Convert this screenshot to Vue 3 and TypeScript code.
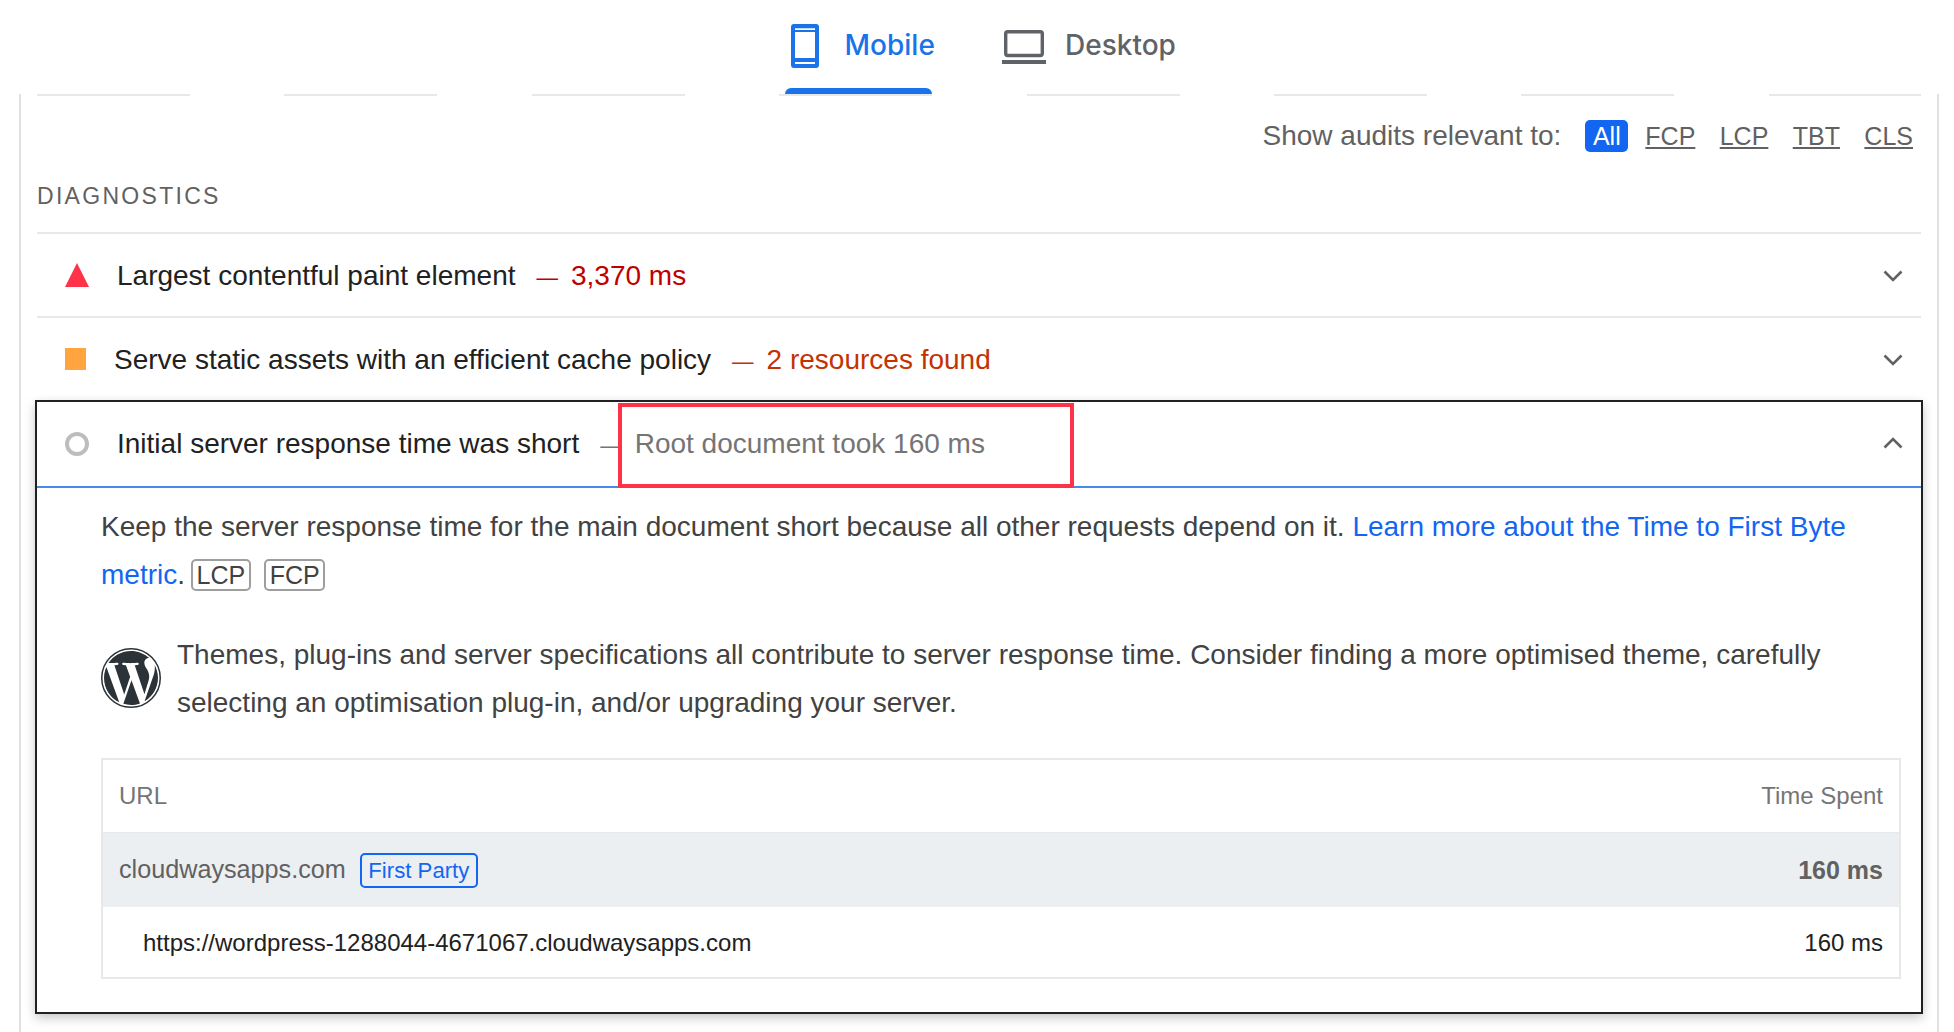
<script setup lang="ts">
const filters = ['FCP', 'LCP', 'TBT', 'CLS'];
</script>

<template>
  <div class="page">
    <!-- Device tabs -->
    <nav class="tabs">
      <a class="tab tab--active">
        <span class="tab__body">
          <svg class="tab__phone" viewBox="0 0 28 44" aria-hidden="true">
            <path
              fill-rule="evenodd"
              d="M3 0h22a3 3 0 0 1 3 3v38a3 3 0 0 1-3 3H3a3 3 0 0 1-3-3V3a3 3 0 0 1 3-3zM4 4.300V6h20V4.300zM4 8v26h20V8zM4 38v2h20v-2z"
            />
          </svg>
          <span class="tab__label">Mobile</span>
        </span>
        <span class="tab__bar"></span>
      </a>
      <a class="tab tab--idle">
        <span class="tab__body">
          <svg class="tab__laptop" viewBox="0 0 44 34" aria-hidden="true">
            <rect x="3.700" y="1.700" width="36.600" height="23.800" rx="2" />
            <path d="M0 30h44v4H0z" />
          </svg>
          <span class="tab__label">Desktop</span>
        </span>
      </a>
    </nav>

    <main class="report">
      <div class="rule"></div>

      <!-- Audit filter -->
      <div class="filter">
        <span class="filter__label">Show audits relevant to:</span>
        <span class="filter__all">All</span>
        <a v-for="item in filters" :key="item" class="filter__link">{{ item }}</a>
      </div>

      <h2 class="section-title">DIAGNOSTICS</h2>

      <!-- Closed audits -->
      <div class="audit">
        <svg class="audit__icon" width="24" height="24" viewBox="0 0 24 24" aria-hidden="true">
          <path d="M12 0l12 24H0z" fill="#ff3347" />
        </svg>
        <span class="audit__title">Largest contentful paint element</span>
        <span class="audit__display audit__display--fail"><span class="audit__dash">—</span>3,370 ms</span>
        <svg class="audit__chevron" width="20" height="12" viewBox="0 0 20 12" aria-hidden="true">
          <path d="M1.500 1.500L10 10l8.500-8.500" />
        </svg>
      </div>

      <div class="audit">
        <span class="audit__square"></span>
        <span class="audit__title">Serve static assets with an efficient cache policy</span>
        <span class="audit__display audit__display--warn"><span class="audit__dash">—</span>2 resources found</span>
        <svg class="audit__chevron" width="20" height="12" viewBox="0 0 20 12" aria-hidden="true">
          <path d="M1.500 1.500L10 10l8.500-8.500" />
        </svg>
      </div>

      <!-- Open audit -->
      <section class="open">
        <div class="open__head">
          <span class="audit__circle"></span>
          <span class="audit__title">Initial server response time was short</span>
          <span class="audit__display"><span class="audit__dash">—</span>Root document took 160 ms</span>
          <svg class="audit__chevron" width="20" height="12" viewBox="0 0 20 12" aria-hidden="true">
            <path d="M1.500 10.500L10 2l8.500 8.500" />
          </svg>
          <div class="open__mark"></div>
        </div>

        <div class="open__body">
          <p class="desc">
            Keep the server response time for the main document short because all other requests depend on it.
            <a class="desc__link">Learn more about the Time to First Byte metric</a>.<span class="desc__tag">LCP</span><span class="desc__tag">FCP</span>
          </p>

          <div class="stack">
            <svg class="stack__logo" viewBox="0 0 24 24" aria-hidden="true">
              <circle cx="12" cy="12" r="11" fill="#2b3238" />
              <path
                fill="#ffffff"
                d="M21.469 6.825c.84 1.537 1.318 3.3 1.318 5.175 0 3.979-2.156 7.456-5.363 9.325l3.295-9.527c.615-1.54.82-2.771.82-3.864 0-.405-.026-.78-.07-1.11m-7.981.105c.647-.03 1.232-.105 1.232-.105.582-.075.514-.93-.067-.899 0 0-1.755.135-2.88.135-1.064 0-2.85-.15-2.85-.15-.585-.03-.661.855-.075.885 0 0 .54.061 1.125.09l1.68 4.605-2.37 7.08L5.354 6.9c.649-.03 1.234-.1 1.234-.1.585-.075.516-.93-.065-.896 0 0-1.746.138-2.874.138-.2 0-.438-.008-.69-.015C4.911 3.15 8.235 1.215 12 1.215c2.809 0 5.365 1.072 7.286 2.833-.046-.003-.091-.009-.141-.009-1.06 0-1.812.923-1.812 1.914 0 .89.513 1.643 1.06 2.531.411.72.89 1.643.89 2.977 0 .915-.354 1.994-.821 3.479l-1.075 3.585-3.9-11.61.001.014zM12 22.784c-1.059 0-2.081-.153-3.048-.437l3.237-9.406 3.315 9.087c.024.053.05.101.078.149-1.12.393-2.325.609-3.582.609M1.211 12c0-1.564.336-3.05.935-4.39L7.29 21.709C3.694 19.96 1.212 16.271 1.211 12M12 0C5.385 0 0 5.385 0 12s5.385 12 12 12 12-5.385 12-12S18.615 0 12 0"
              />
              <circle cx="12" cy="12" r="11.700" fill="none" stroke="#2b3238" stroke-width="0.600" />
            </svg>
            <p class="stack__text">
              Themes, plug-ins and server specifications all contribute to server response time. Consider finding a more
              optimised theme, carefully selecting an optimisation plug-in, and/or upgrading your server.
            </p>
          </div>

          <div class="table">
            <div class="table__row table__row--head">
              <span>URL</span>
              <span class="table__time">Time Spent</span>
            </div>
            <div class="table__row table__row--group">
              <span class="table__host">
                cloudwaysapps.com
                <span class="table__party">First Party</span>
              </span>
              <strong class="table__total">160 ms</strong>
            </div>
            <div class="table__row table__row--item">
              <span class="table__url">https://wordpress-1288044-4671067.cloudwaysapps.com</span>
              <span>160 ms</span>
            </div>
          </div>
        </div>
      </section>
    </main>
  </div>
</template>

<style>
html,
body {
  margin: 0;
  background: #ffffff;
}
</style>

<style scoped>
.page {
  height: 1032px;
  overflow: hidden;
  background: #ffffff;
  font-family: "Liberation Sans", Arial, sans-serif;
  color: #212121;
}

/* Tabs ------------------------------------------------------------ */
.tabs {
  display: flex;
  height: 94px;
  padding-left: 785px;
}

.tab {
  display: flex;
  flex-direction: column;
  height: 94px;
}

.tab--active {
  width: 147px;
  color: #1a73e8;
}

.tab--idle {
  margin-left: 70px;
  padding-bottom: 6px;
  box-sizing: border-box;
  color: #5f6368;
}

.tab__body {
  display: flex;
  flex: 1;
  align-items: center;
  font-family: Inter, Roboto, sans-serif;
  font-size: 28px;
  font-weight: 500;
}

.tab__phone {
  flex: none;
  width: 28px;
  height: 44px;
  margin: 4px 25.500px 0 6px;
  fill: #1a73e8;
}

.tab__laptop {
  flex: none;
  width: 44px;
  height: 34px;
  margin: 6px 19px 0 0;
  fill: none;
}

.tab__laptop rect {
  stroke: #5f6368;
  stroke-width: 3.400;
}

.tab__laptop path {
  fill: #5f6368;
}

.tab__label {
  margin-top: 2px;
}

.tab__bar {
  height: 6px;
  border-radius: 6px 6px 0 0;
  background: #1a73e8;
}

/* Report ---------------------------------------------------------- */
.report {
  box-sizing: border-box;
  width: 1920px;
  height: 938px;
  margin-left: 19px;
  padding: 0 16px;
  border-left: 2px solid #dfe1e5;
  border-right: 2px solid #dfe1e5;
}

.rule {
  height: 2px;
  background: repeating-linear-gradient(to right, #e8e8e8 0 153px, transparent 153px 247.400px);
}

.filter {
  display: flex;
  align-items: center;
  justify-content: flex-end;
  height: 32px;
  margin-top: 24px;
  padding-right: 8px;
  font-size: 25px;
  color: #616161;
}

.filter__label {
  margin-right: 24px;
  font-size: 28px;
}

.filter__all {
  box-sizing: border-box;
  width: 43px;
  height: 32px;
  margin-right: 17px;
  border-radius: 5px;
  background: #1266f1;
  color: #ffffff;
  line-height: 32px;
  text-align: center;
}

.filter__link {
  margin-left: 24.400px;
  text-decoration: underline;
}

.filter__all + .filter__link {
  margin-left: 0;
}

.section-title {
  height: 80px;
  margin: 0;
  padding-top: 31px;
  box-sizing: border-box;
  font-size: 23px;
  font-weight: 400;
  line-height: 26px;
  letter-spacing: 2.300px;
  color: #616161;
}

/* Audits ---------------------------------------------------------- */
.audit,
.open__head {
  position: relative;
  display: flex;
  align-items: center;
  box-sizing: border-box;
  padding: 0 18px 0 28px;
  font-size: 28px;
}

.audit {
  height: 84px;
  border-top: 2px solid #e8e8e8;
}

.audit .audit__title,
.audit .audit__display,
.audit .audit__chevron {
  margin-top: 2px;
}

.audit__icon {
  flex: none;
  margin-right: 28px;
}

.audit__square {
  flex: none;
  width: 21px;
  height: 22px;
  margin-right: 28px;
  background: #ffa43e;
}

.audit__circle {
  flex: none;
  box-sizing: border-box;
  width: 24px;
  height: 24px;
  margin-right: 28px;
  border: 4px solid #bdbdbd;
  border-radius: 50%;
}

.audit__title {
  white-space: nowrap;
}

.audit__display {
  margin-left: 21px;
  white-space: nowrap;
  color: #757575;
}

.audit__display--fail {
  color: #c00000;
}

.audit__display--warn {
  color: #c33300;
}

.audit__dash {
  margin-right: 13px;
  font-size: 21.500px;
}

.audit__chevron {
  flex: none;
  margin-left: auto;
  fill: none;
  stroke: #616161;
  stroke-width: 2.600;
}

.open__head .audit__chevron {
  margin-top: -2px;
}

/* Open audit ------------------------------------------------------ */
.open {
  box-sizing: border-box;
  height: 614px;
  margin: 0 -2px;
  border: 2px solid #212121;
  box-shadow: 0 4px 10px rgba(0, 0, 0, 0.22);
}

.open__head {
  height: 86px;
  padding-left: 28px;
  padding-right: 18px;
  border-bottom: 2px solid #4a8ae8;
}

.open__mark {
  position: absolute;
  top: 1px;
  left: 581px;
  box-sizing: border-box;
  width: 456px;
  height: 85px;
  border: 4.700px solid #ff3347;
}

.open__body {
  padding: 15px 20px 0 64px;
  font-size: 28px;
  line-height: 48px;
  color: #424242;
}

.desc {
  margin: 0;
}

.desc__link {
  color: #1266f1;
}

.desc__tag {
  display: inline-block;
  box-sizing: border-box;
  height: 32px;
  margin-left: 13.500px;
  padding: 0 3.500px;
  border: 2px solid #9e9e9e;
  border-radius: 5px;
  font-size: 25px;
  line-height: 28px;
}

.desc__tag:first-of-type {
  margin-left: 6px;
}

.stack {
  display: flex;
  align-items: flex-start;
  margin-top: 32px;
}

.stack__logo {
  flex: none;
  width: 60px;
  height: 60px;
  margin: 17px 16px 0 0;
}

.stack__text {
  margin: 0;
  max-width: 1700px;
}

/* Table ----------------------------------------------------------- */
.table {
  box-sizing: border-box;
  height: 221px;
  margin-top: 31px;
  border: 2px solid #e8e8e8;
  font-size: 24px;
  line-height: 28px;
}

.table__row {
  display: flex;
  align-items: center;
  justify-content: space-between;
  box-sizing: border-box;
  height: 72.500px;
  padding: 0 16px 0 16px;
}

.table__row--head {
  color: #757575;
  border-bottom: 1px solid #e8e8e8;
}

.table__row--group {
  height: 74px;
  padding-top: 1px;
  background: #eceff1;
  color: #616161;
}

.table__row--item {
  color: #212121;
}

.table__host {
  font-size: 25.200px;
}

.table__party {
  display: inline-block;
  box-sizing: border-box;
  height: 35px;
  margin-left: 7px;
  padding: 0 6.500px;
  border: 2px solid #1266f1;
  border-radius: 5px;
  color: #1266f1;
  font-size: 22.200px;
  line-height: 31px;
}

.table__total {
  font-size: 25px;
}

.table__url {
  padding-left: 24px;
}
</style>
